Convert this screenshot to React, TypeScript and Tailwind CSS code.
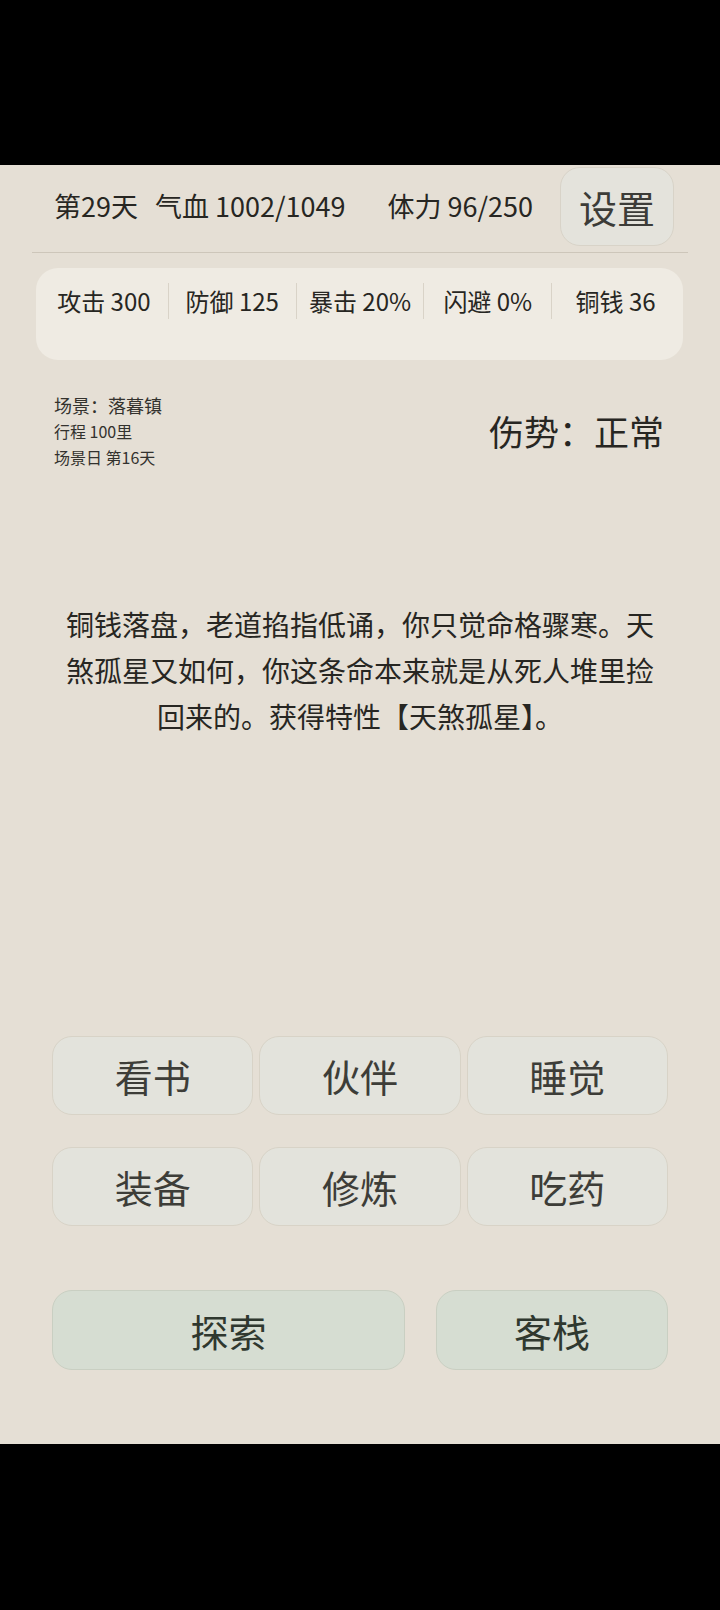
const font = { fontFamily: '"Noto Sans CJK SC", "Noto Sans", sans-serif' };

const stats = [
  { label: '攻击', value: '300' },
  { label: '防御', value: '125' },
  { label: '暴击', value: '20%' },
  { label: '闪避', value: '0%' },
  { label: '铜钱', value: '36' },
];

const actions = ['看书', '伙伴', '睡觉', '装备', '修炼', '吃药'];

const App = () => {
  return (
    <div className="w-[720px] h-[1610px] bg-black flex flex-col" style={font}>
      <div className="h-[165px] shrink-0" />

      <main className="h-[1279px] shrink-0 bg-[#e5dfd5] flex flex-col text-[#272622]">
        {/* top bar */}
        <div className="mx-[32px] border-b border-[#cdc6ba]">
          <div className="flex items-center h-[79px] mt-[2px] mb-[6px] pl-[22px] pr-[14px] text-[27px]">
            <span>第29天</span>
            <span className="ml-[17px]">气血 1002/1049</span>
            <span className="ml-[42px]">体力 96/250</span>
            <button className="ml-auto w-[114px] h-[79px] rounded-[20px] bg-[#e4e3dc] border border-[#d8d3c8] text-[38px] text-[#3c3c38]">
              设置
            </button>
          </div>
        </div>

        {/* stats panel */}
        <div className="mt-[15px] ml-[36px] mr-[37px] h-[92px] rounded-[22px] bg-[#efebe3] px-[4px] pt-[15px]">
          <div className="grid grid-cols-5">
            {stats.map((s, i) => (
              <div
                key={s.label}
                className={`h-[36px] flex items-center justify-center text-[24px] ${
                  i > 0 ? 'border-l border-[#d9d3c8]' : ''
                }`}
              >
                {s.label} {s.value}
              </div>
            ))}
          </div>
        </div>

        {/* scene info */}
        <div className="mt-[32px] pl-[54px] pr-[56px] flex items-center justify-between">
          <div className="text-[#33322e]">
            <div className="text-[18px] leading-[26px]">场景：落暮镇</div>
            <div className="text-[16px] leading-[26px]">行程 100里</div>
            <div className="text-[16px] leading-[26px]">场景日 第16天</div>
          </div>
          <div className="text-[35px]">伤势：正常</div>
        </div>

        {/* story text */}
        <p className="mt-[131px] mx-[60px] text-center text-[28px] leading-[46px]">
          铜钱落盘，老道掐指低诵，你只觉命格骤寒。天煞孤星又如何，你这条命本来就是从死人堆里捡回来的。获得特性【天煞孤星】。
        </p>

        {/* actions */}
        <div className="mt-[297px] mx-[52px] grid grid-cols-3 gap-x-[6px] gap-y-[32px]">
          {actions.map((a) => (
            <button
              key={a}
              className="h-[79px] rounded-[20px] bg-[#e3e3dc] border border-[#d8d3c7] text-[38px] text-[#3d3d38]"
            >
              {a}
            </button>
          ))}
        </div>

        <div className="mt-[64px] mx-[52px] flex gap-[31px]">
          <button className="w-[353px] h-[80px] rounded-[20px] bg-[#d6ddd2] border border-[#c9cfc2] text-[38px] text-[#2f382f]">
            探索
          </button>
          <button className="flex-1 h-[80px] rounded-[20px] bg-[#d6ddd2] border border-[#c9cfc2] text-[38px] text-[#2f382f]">
            客栈
          </button>
        </div>
      </main>

      <div className="flex-1" />
    </div>
  );
};

export default App;
